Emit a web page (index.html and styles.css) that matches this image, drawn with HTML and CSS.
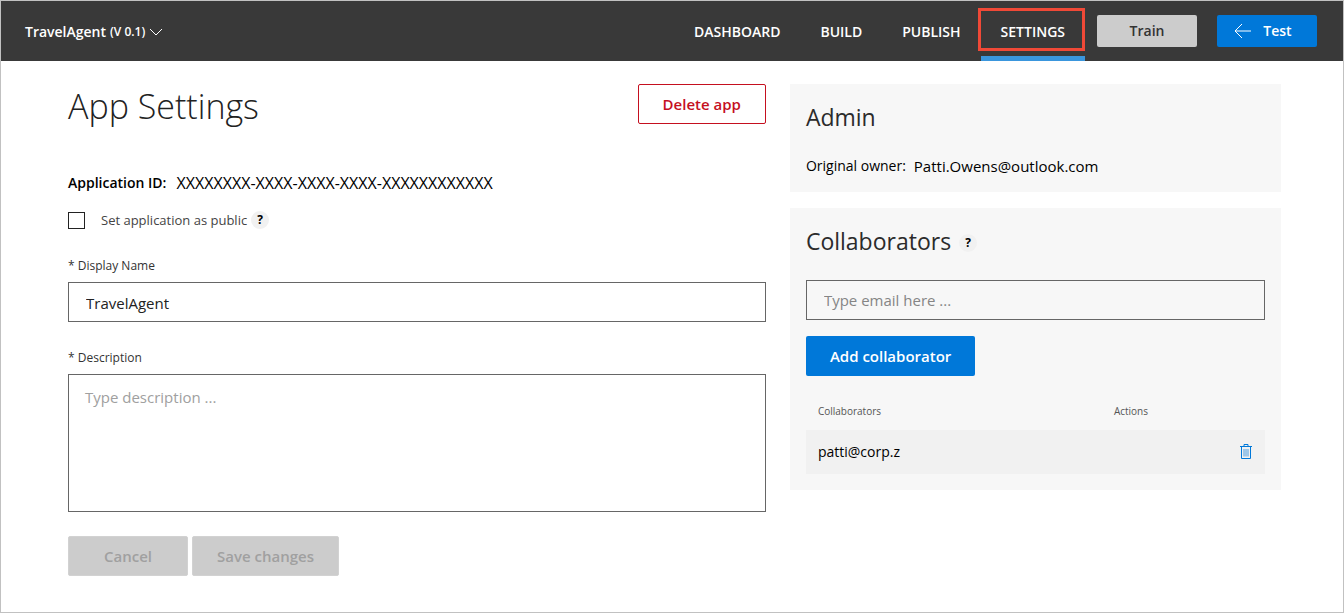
FILE: index.html
```html
<!DOCTYPE html>
<html lang="en">
<head>
<meta charset="utf-8">
<title>TravelAgent - App Settings</title>
<link rel="stylesheet" href="styles.css">
</head>
<body>
<header class="topbar">
  <button class="app-picker" type="button">
    <span class="app-name">TravelAgent</span>
    <span class="app-version">(V 0.1)</span>
    <svg class="chevron" viewBox="0 0 14 8" aria-hidden="true"><path d="M1 1l6 6 6-6"/></svg>
  </button>
  <nav class="tabs">
    <a class="tab" href="#dashboard">DASHBOARD</a>
    <a class="tab" href="#build">BUILD</a>
    <a class="tab" href="#publish">PUBLISH</a>
    <a class="tab tab-active" href="#settings" aria-current="page">SETTINGS</a>
  </nav>
  <div class="top-actions">
    <button class="top-btn train" type="button">Train</button>
    <button class="top-btn test" type="button">
      <svg class="arrow" viewBox="0 0 17 16" aria-hidden="true"><path d="M8 1L1 8l7 7M1 8h16"/></svg>
      Test
    </button>
  </div>
</header>
<main class="content">
  <form class="settings">
    <div class="title-row">
      <h1 class="title">App Settings</h1>
      <button class="btn btn-danger" type="button">Delete app</button>
    </div>
    <p class="app-id"><b class="app-id-label">Application ID:</b><span class="app-id-value">XXXXXXXX-XXXX-XXXX-XXXX-XXXXXXXXXXXX</span></p>
    <div class="public-row">
      <input class="checkbox" type="checkbox" id="public">
      <label class="public-label" for="public">Set application as public</label>
      <button class="help" type="button" aria-label="About public applications">?</button>
    </div>
    <label class="field-label" for="display-name">* Display Name</label>
    <input class="field" type="text" id="display-name" value="TravelAgent">
    <label class="field-label" for="description">* Description</label>
    <textarea class="field area" id="description" placeholder="Type description ..."></textarea>
    <div class="form-actions">
      <button class="btn btn-muted" type="button" disabled>Cancel</button>
      <button class="btn btn-muted" type="submit" disabled>Save changes</button>
    </div>
  </form>
  <aside class="side">
    <section class="panel">
      <h2 class="panel-title">Admin</h2>
      <p class="owner"><span>Original owner:</span><span class="owner-email">Patti.Owens@outlook.com</span></p>
    </section>
    <section class="panel">
      <div class="panel-head">
        <h2 class="panel-title">Collaborators</h2>
        <button class="help" type="button" aria-label="About collaborators">?</button>
      </div>
      <input class="field email" type="email" placeholder="Type email here ..." aria-label="Collaborator email">
      <button class="btn btn-primary" type="button">Add collaborator</button>
      <table class="people">
        <thead>
          <tr><th class="col-name" scope="col">Collaborators</th><th scope="col">Actions</th></tr>
        </thead>
        <tbody>
          <tr>
            <td>patti@corp.z</td>
            <td>
              <button class="trash" type="button" aria-label="Remove patti@corp.z">
                <svg class="trash-icon" viewBox="0 0 14 16" aria-hidden="true">
                  <path d="M1 2.500h12M5 2.500V.5h4v2M2.500 3v11.500h9V3"/>
                  <path class="trash-slats" d="M5 5v7.500M7 5v7.500M9 5v7.500"/>
                </svg>
              </button>
            </td>
          </tr>
        </tbody>
      </table>
    </section>
  </aside>
</main>
</body>
</html>
```
FILE: styles.css
```css
* {
  box-sizing: border-box;
}

body {
  margin: 0;
  min-height: 100vh;
  border: 1px solid #c1c1c1;
  background: #fff;
  color: #000;
  font-family: "Open Sans", "Noto Sans", sans-serif;
  font-size: 14px;
  line-height: 20px;
}

button,
input,
textarea {
  margin: 0;
  font: inherit;
}

h1,
h2,
p {
  margin: 0;
}

svg {
  display: block;
  fill: none;
  stroke: currentColor;
}

.topbar {
  display: flex;
  align-items: center;
  height: 60px;
  padding: 0 26px 0 24px;
  background: #393939;
  color: #fff;
}

.app-picker {
  display: flex;
  align-items: center;
  gap: 4px;
  padding: 2px 0 0;
  border: 0;
  background: none;
  color: inherit;
  font-weight: 600;
}

.app-version {
  font-size: 12px;
}

.chevron {
  width: 14px;
  height: 8px;
}

.tabs {
  display: flex;
  align-self: stretch;
  margin-left: auto;
}

.tab {
  display: flex;
  align-items: center;
  padding: 2px 20px 0;
  color: inherit;
  font-weight: 600;
  text-decoration: none;
}

.tab-active {
  position: relative;
  border-bottom: 5px solid #3a96dd;
  padding-top: 7px;
}

.tab-active::before {
  content: "";
  position: absolute;
  inset: 7px 0 5px -3px;
  border: 3px solid #f04937;
}

.top-actions {
  display: flex;
  gap: 20px;
  margin-left: 12px;
}

.top-btn {
  display: flex;
  align-items: center;
  justify-content: center;
  gap: 12px;
  width: 100px;
  height: 32px;
  padding: 0;
  border: 0;
  border-radius: 2px;
  font-weight: 600;
}

.train {
  background: #ccc;
  color: #333;
}

.test {
  padding-right: 8px;
  background: #0078d9;
  color: #fff;
}

.arrow {
  width: 17px;
  height: 16px;
}

.content {
  display: grid;
  grid-template-columns: 27fr 19fr;
  gap: 24px;
  align-items: start;
  padding: 23px 62px 24px 67px;
}

.settings {
  display: flex;
  flex-direction: column;
}

.title-row {
  display: flex;
  justify-content: space-between;
  align-items: flex-start;
  height: 89px;
}

.title {
  color: #222;
  font-size: 34px;
  font-weight: 300;
  line-height: 44px;
}

.btn {
  height: 40px;
  padding: 0 24px;
  border: 0;
  border-radius: 2px;
  font-size: 15px;
  font-weight: 600;
}

.btn-danger {
  border: 1px solid #c50f1f;
  background: #fff;
  color: #c50f1f;
}

.app-id {
  display: flex;
  gap: 10px;
}

.app-id-label {
  font-weight: 600;
}

.app-id-value {
  font-size: 16px;
}

.public-row {
  display: flex;
  align-items: center;
  height: 20px;
  margin: 17px 0 26px;
}

.checkbox {
  appearance: none;
  width: 17px;
  height: 17px;
  border: 1px solid #222;
  background: #fff;
}

.public-label {
  margin: 0 4px 0 16px;
  color: #444;
  font-size: 13px;
}

.help {
  width: 18px;
  height: 18px;
  padding: 0;
  border: 0;
  border-radius: 50%;
  background: #f1f1f1;
  color: #000;
  font-size: 12px;
  font-weight: 700;
  line-height: 18px;
}

.field-label {
  margin-bottom: 6px;
  color: #333;
  font-size: 12px;
}

.field {
  display: block;
  width: 100%;
  height: 40px;
  margin-bottom: 26px;
  padding: 2px 17px 0;
  border: 1px solid #666;
  border-radius: 0;
  background: transparent;
  color: #222;
  font-size: 15px;
}

.field::placeholder {
  color: #858585;
  opacity: 1;
}

.area {
  height: 138px;
  margin-bottom: 24px;
  padding: 12px 16px;
  resize: none;
}

.area::placeholder {
  color: #a0a0a0;
}

.form-actions {
  display: flex;
  gap: 4px;
}

.btn-muted {
  min-width: 120px;
  border: 1px solid #d2d2d2;
  background: #ccc;
  color: #a0a0a0;
}

.side {
  display: grid;
  gap: 16px;
}

.panel {
  padding: 16px;
  background: #f7f7f7;
}

.panel-title {
  color: #2b2b2b;
  font-size: 23px;
  font-weight: 400;
  line-height: 34px;
}

.owner {
  display: flex;
  gap: 8px;
  margin-top: 22px;
}

.owner-email {
  font-size: 15px;
}

.panel-head {
  display: flex;
  align-items: center;
  gap: 8px;
  margin-bottom: 22px;
}

.panel-head .help {
  margin-top: 4px;
}

.email {
  margin-bottom: 16px;
  padding-top: 0;
}

.btn-primary {
  background: #0078d9;
  color: #fff;
}

.people {
  width: 100%;
  margin-top: 24px;
  border-collapse: collapse;
}

.people th {
  padding: 0 12px 8px;
  color: #555;
  font-size: 10px;
  font-weight: 400;
  line-height: 22px;
  text-align: left;
}

.people td {
  height: 44px;
  padding: 0 12px;
  background: #f1f1f1;
}

.col-name {
  width: 296px;
}

.trash {
  display: block;
  margin-left: auto;
  padding: 0;
  border: 0;
  background: none;
  color: #0078d9;
}

.trash-icon {
  width: 14px;
  height: 16px;
}

.trash-slats {
  opacity: 0.7;
}
```
